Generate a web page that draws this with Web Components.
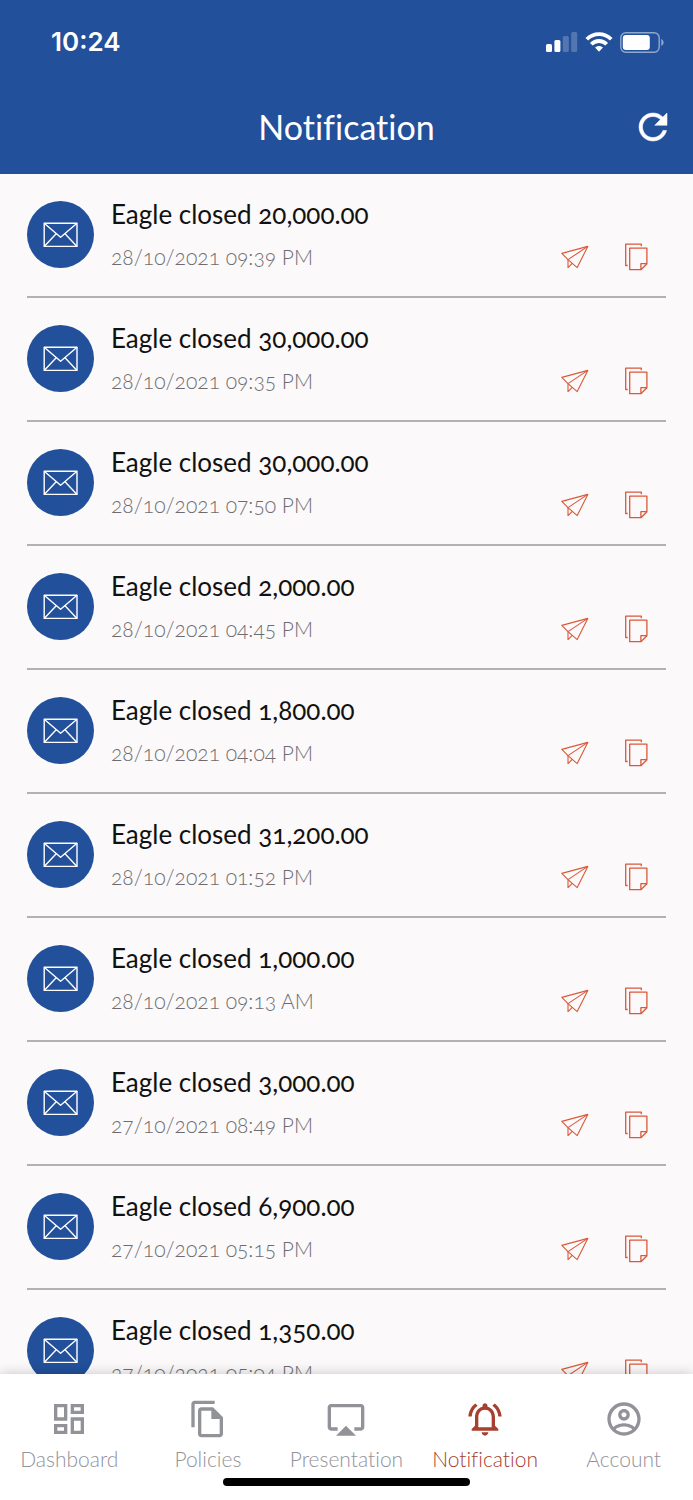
<!DOCTYPE html>
<html lang="en">
<head>
<meta charset="utf-8">
<meta name="viewport" content="width=device-width, initial-scale=1">
<title>Notification</title>
<style>
  html, body { margin: 0; height: 100%; }
  body {
    --blue: #22509a;
    --page: #fbf9fa;
    --orange: #d9593a;
    --active: #a8402f;
    --muted: #929299;
    font-family: Lato, "Open Sans", sans-serif;
    font-variant-ligatures: none;
    background: var(--page);
  }
</style>
</head>
<body>
<app-shell></app-shell>
<script>
const define = (name, html, setup) => {
  const template = document.createElement('template');
  template.innerHTML = html;
  customElements.define(name, class extends HTMLElement {
    connectedCallback() {
      if (this.shadowRoot) return;
      this.attachShadow({ mode: 'open' }).append(template.content.cloneNode(true));
      if (setup) setup(this, this.shadowRoot);
    }
  });
};

const ICONS = {
  refresh: ['0 0 24 24', '<path fill="currentColor" stroke="currentColor" stroke-width=".3" d="M17.65 6.35C16.2 4.9 14.21 4 12 4c-4.42 0-7.99 3.58-7.99 8s3.57 8 7.99 8c3.73 0 6.84-2.55 7.73-6h-2.08c-.82 2.33-3.04 4-5.65 4-3.31 0-6-2.69-6-6s2.69-6 6-6c1.66 0 3.14.69 4.22 1.78L13 11h7V4l-2.35 2.35z"/>'],
  dashboard: ['0 0 24 24', '<path fill="currentColor" d="M19 5v2h-4V5h4M9 5v6H5V5h4m10 8v6h-4v-6h4M9 17v2H5v-2h4M21 3h-8v6h8V3zM11 3H3v10h8V3zm10 8h-8v10h8V11zm-10 4H3v6h8v-6z"/>'],
  policies: ['0 0 24 24', '<path fill="currentColor" d="M16 1H4c-1.1 0-2 .9-2 2v14h2V3h12V1zm-1 4H8c-1.1 0-1.99.9-1.99 2L6 21c0 1.1.89 2 1.99 2H19c1.1 0 2-.9 2-2V11l-6-6zM8 21V7h6v5h5v9H8z"/>'],
  presentation: ['0 0 24 24', '<path fill="currentColor" d="M6 22h12l-6-6zM21 3H3c-1.1 0-2 .9-2 2v12c0 1.1.9 2 2 2h4v-2H3V5h18v12h-4v2h4c1.1 0 2-.9 2-2V5c0-1.1-.9-2-2-2z"/>'],
  bell: ['0 0 24 24', '<path fill="currentColor" d="M12 22c1.1 0 2-.9 2-2h-4c0 1.1.9 2 2 2zm6-6v-5c0-3.07-1.63-5.64-4.5-6.32V4c0-.83-.67-1.5-1.5-1.5s-1.5.67-1.5 1.5v.68C7.64 5.36 6 7.92 6 11v5l-2 2v1h16v-1l-2-2zm-2 1H8v-6c0-2.48 1.51-4.5 4-4.5s4 2.02 4 4.5v6zM7.58 4.08L6.15 2.65C3.75 4.48 2.17 7.3 2.03 10.5h2c.15-2.65 1.51-4.97 3.55-6.42zm12.39 6.42h2c-.15-3.2-1.73-6.02-4.12-7.85l-1.42 1.43c2.02 1.45 3.39 3.77 3.54 6.42z"/>'],
  account: ['0 0 24 24', '<path fill="currentColor" d="M12 2C6.48 2 2 6.48 2 12s4.48 10 10 10 10-4.48 10-10S17.52 2 12 2zM7.07 18.28c.43-.9 3.05-1.78 4.93-1.78s4.51.88 4.93 1.78C15.57 19.36 13.86 20 12 20s-3.57-.64-4.93-1.72zm11.29-1.45c-1.43-1.74-4.9-2.33-6.36-2.33s-4.93.59-6.36 2.33C4.62 15.49 4 13.82 4 12c0-4.41 3.59-8 8-8s8 3.59 8 8c0 1.82-.62 3.49-1.64 4.83zM12 6c-1.94 0-3.5 1.56-3.5 3.5S10.06 13 12 13s3.5-1.56 3.5-3.5S13.94 6 12 6zm0 5c-.83 0-1.5-.67-1.5-1.5S11.17 8 12 8s1.5.67 1.5 1.5S12.83 11 12 11z"/>'],
  mail: ['0 0 36 26', '<g fill="none" stroke="currentColor" stroke-width="1.4" stroke-linejoin="round"><path d="M1.200 1.200h32.800v23.200H1.200z"/><path d="M1.200 1.200 17.600 15.200 34 1.200M1.200 24.400l12.200-12.800M34 24.400l-12.200-12.800"/></g>'],
  send: ['0 0 28 28', '<g fill="none" stroke="currentColor" stroke-width="1.1" stroke-linejoin="round"><path d="M.8 10.400 26.800 3.400 16.200 24.600 7 16.600z"/><path d="M26.800 3.400 7 16.600v8l4.300-4.300"/></g>'],
  copy: ['0 0 28 28', '<g fill="none" stroke="currentColor" stroke-width="1.3" stroke-linejoin="round"><path d="M18.300 3.200V1.200H2.700v21.300h2"/><path d="M6.700 5.200h17.200v15.500l-6 6H6.700z"/><path d="M17.900 26.700v-6h6"/></g>'],
  signal: ['0 0 32 20', '<g fill="currentColor"><rect x="0" y="12" width="6" height="8" rx="1.500"/><rect x="8.400" y="8" width="6" height="12" rx="1.500"/><g opacity=".22"><rect x="16.800" y="4" width="6" height="16" rx="1.500"/><rect x="25.200" y="0" width="6" height="20" rx="1.500"/></g></g>'],
  wifi: ['0 0 28 20', '<g fill="none" stroke="currentColor" stroke-width="3.800"><path d="M1.800 7.300C8.500.300 19.500.300 26.200 7.300"/><path d="M6.300 12.300C10.500 7.900 17.500 7.900 21.700 12.300"/></g><path fill="currentColor" d="M14 19.800 10 15.600c2.200-2.100 5.800-2.100 8 0z"/>'],
  battery: ['0 0 44 21', '<rect x=".8" y=".8" width="38.400" height="19.400" rx="5" fill="none" stroke="currentColor" stroke-width="1.400" opacity=".5"/><rect x="2.800" y="3" width="27" height="15" rx="3" fill="currentColor"/><path d="M41.300 7v7c3-1.500 3-5.500 0-7z" fill="currentColor" opacity=".5"/>']
};

define('app-icon', `
  <style>
    :host { display: block; flex: none; width: 40px; height: 40px; }
    svg { display: block; width: 100%; height: 100%; }
  </style>
  <svg aria-hidden="true"></svg>`, (host, root) => {
  const [box, art] = ICONS[host.getAttribute('name')];
  const svg = root.querySelector('svg');
  svg.setAttribute('viewBox', box);
  svg.innerHTML = art;
});

define('status-bar', `
  <style>
    :host {
      display: flex; align-items: center; justify-content: space-between;
      box-sizing: border-box; height: 84px; padding: 0 29px 0 51px;
      color: #fff; font: 600 26px/32px Inter, sans-serif;
    }
    .indicators { display: flex; align-items: center; gap: 7px; }
    .signal { width: 32px; height: 20px; }
    .wifi { width: 28px; height: 20px; }
    .battery { width: 44px; height: 21px; }
  </style>
  <time>10:24</time>
  <div class="indicators">
    <app-icon class="signal" name="signal"></app-icon>
    <app-icon class="wifi" name="wifi"></app-icon>
    <app-icon class="battery" name="battery"></app-icon>
  </div>`);

define('title-bar', `
  <style>
    :host {
      display: grid; grid-template-columns: 1fr auto 1fr; align-items: center;
      box-sizing: border-box; height: 90px; padding: 0 19px 4px; color: #fff;
    }
    h1 { grid-column: 2; margin: 0; font-size: 34px; line-height: 40px; font-weight: 400; }
    button { justify-self: end; padding: 0; border: 0; background: none; color: inherit; cursor: pointer; }
    app-icon { width: 42px; height: 42px; }
  </style>
  <h1><slot></slot></h1>
  <button type="button" aria-label="Refresh"><app-icon name="refresh"></app-icon></button>`);

define('notification-row', `
  <style>
    :host {
      display: flex; gap: 17px; box-sizing: border-box;
      margin: 0 27px; padding: 27px 0 25px; border-bottom: 2px solid #b3b1b3;
    }
    .badge {
      display: grid; place-items: center; flex: none; width: 67px; height: 67px;
      border-radius: 50%; background: var(--blue); color: #fff;
    }
    .badge app-icon { width: 36px; height: 26px; }
    .body { flex: 1; display: flex; flex-direction: column; gap: 16px; }
    h2 { margin: 0; color: #111; font-size: 26px; line-height: 26px; font-weight: 400; font-variant-numeric: oldstyle-nums; }
    .meta { display: flex; align-items: center; justify-content: space-between; height: 28px; }
    .date { color: #6c6c70; font-size: 21px; line-height: 26px; font-weight: 300; font-variant-numeric: oldstyle-nums; }
    .actions { display: flex; gap: 34px; margin-right: 15px; }
    button { padding: 0; border: 0; background: none; color: var(--orange); cursor: pointer; }
    button app-icon { width: 28px; height: 28px; }
  </style>
  <div class="badge"><app-icon name="mail"></app-icon></div>
  <div class="body">
    <h2><slot></slot></h2>
    <div class="meta">
      <span class="date"><slot name="date"></slot></span>
      <div class="actions">
        <button type="button" aria-label="Send"><app-icon name="send"></app-icon></button>
        <button type="button" aria-label="Copy"><app-icon name="copy"></app-icon></button>
      </div>
    </div>
  </div>`);

define('nav-item', `
  <style>
    :host { display: block; flex: 1 1 0; min-width: 0; color: var(--muted); }
    :host([current]) { color: var(--active); }
    a { display: flex; flex-direction: column; align-items: center; gap: 8px; color: inherit; text-decoration: none; }
    span { font-size: 21px; line-height: 24px; font-weight: 300; white-space: nowrap; }
  </style>
  <a href="#"><span><slot></slot></span></a>`, (host, root) => {
  const icon = document.createElement('app-icon');
  icon.setAttribute('name', host.getAttribute('icon'));
  const link = root.querySelector('a');
  link.prepend(icon);
  if (host.hasAttribute('current')) link.setAttribute('aria-current', 'page');
});

define('bottom-nav', `
  <style>
    :host { display: block; position: relative; background: #fff; box-shadow: 0 0 12px rgba(0, 0, 0, .22); }
    nav { display: flex; padding-top: 25px; }
    .home { width: 247px; height: 8px; margin: 7px auto 14px; border-radius: 4px; background: #000; }
  </style>
  <nav aria-label="Main"><slot></slot></nav>
  <div class="home"></div>`);

define('app-shell', `
  <style>
    :host { display: flex; flex-direction: column; height: 100vh; }
    header { flex: none; background: var(--blue); }
    main { flex: 1; min-height: 0; overflow-y: auto; scrollbar-width: none; }
    bottom-nav { flex: none; }
  </style>
  <header>
    <status-bar></status-bar>
    <title-bar>Notification</title-bar>
  </header>
  <main></main>
  <bottom-nav>
    <nav-item icon="dashboard">Dashboard</nav-item>
    <nav-item icon="policies">Policies</nav-item>
    <nav-item icon="presentation">Presentation</nav-item>
    <nav-item icon="bell" current>Notification</nav-item>
    <nav-item icon="account">Account</nav-item>
  </bottom-nav>`, (host, root) => {
  const entries = [
    ['20,000.00', '28/10/2021 09:39 PM'],
    ['30,000.00', '28/10/2021 09:35 PM'],
    ['30,000.00', '28/10/2021 07:50 PM'],
    ['2,000.00', '28/10/2021 04:45 PM'],
    ['1,800.00', '28/10/2021 04:04 PM'],
    ['31,200.00', '28/10/2021 01:52 PM'],
    ['1,000.00', '28/10/2021 09:13 AM'],
    ['3,000.00', '27/10/2021 08:49 PM'],
    ['6,900.00', '27/10/2021 05:15 PM'],
    ['1,350.00', '27/10/2021 05:04 PM']
  ];
  root.querySelector('main').innerHTML = entries.map(([amount, date]) =>
    `<notification-row>Eagle closed ${amount}<time slot="date">${date}</time></notification-row>`).join('');
});
</script>
</body>
</html>
